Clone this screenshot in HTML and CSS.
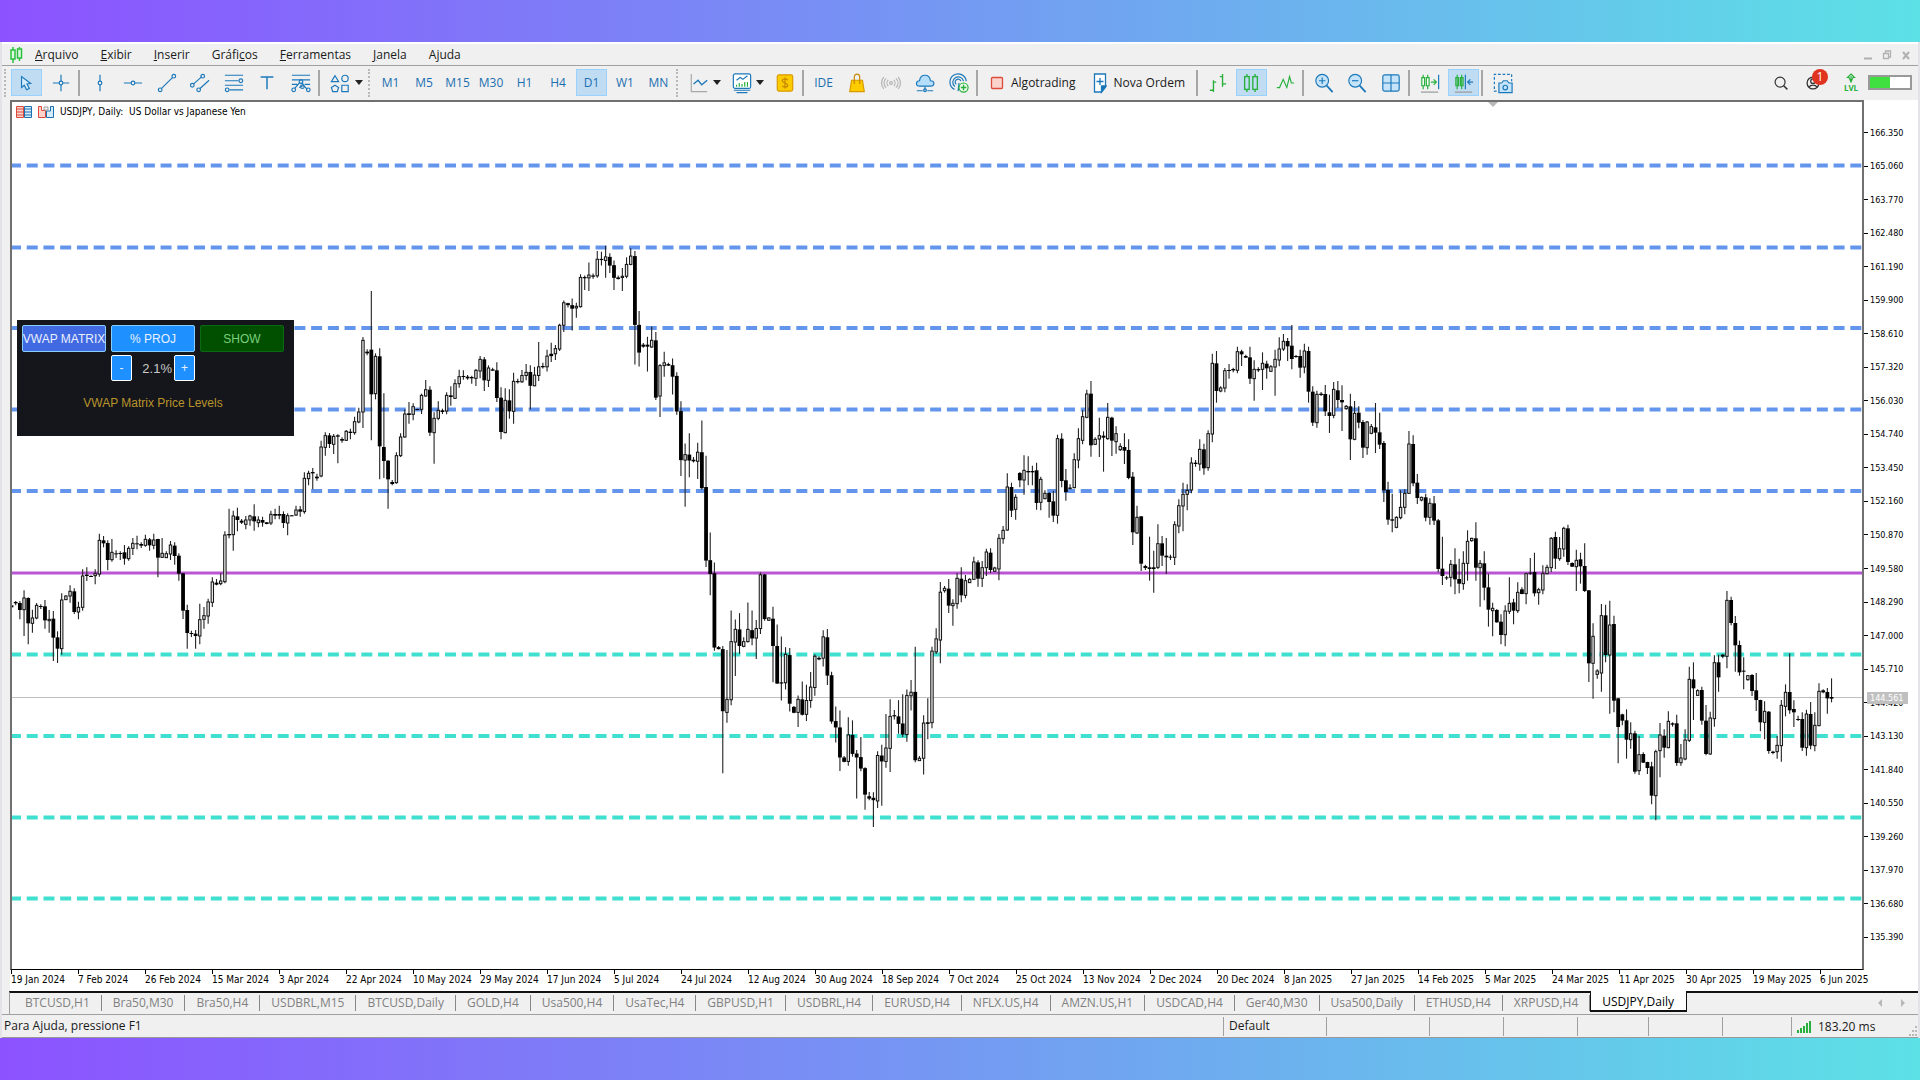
FILE: index.html
```
<!DOCTYPE html>
<html lang="pt">
<head>
    <meta charset="UTF-8">
    <meta name="viewport" content="width=device-width, initial-scale=1.0">
    <title>USDJPY,Daily</title>
    <link rel="stylesheet" href="styles.css">
</head>
<body>
    <div class="window">
        <header class="menubar">
            <svg class="logo" width="14" height="16" viewBox="0 0 14 16"><path d="M4 0v16M10.500 0v14" /><rect x="2" y="3" width="4" height="9"/><rect x="8.500" y="2" width="4" height="9"/></svg>
            <nav class="menu">
                <a href="#"><u>A</u>rquivo</a>
                <a href="#"><u>E</u>xibir</a>
                <a href="#"><u>I</u>nserir</a>
                <a href="#">Gráfi<u>c</u>os</a>
                <a href="#"><u>F</u>erramentas</a>
                <a href="#"><u>J</u>anela</a>
                <a href="#">A<u>j</u>uda</a>
            </nav>
            <div class="winbuttons">
                <button type="button" aria-label="Minimizar"><svg width="10" height="10" viewBox="0 0 10 10"><path d="M1 8.500h8" stroke-width="2"/></svg></button>
                <button type="button" aria-label="Restaurar"><svg width="10" height="10" viewBox="0 0 10 10"><path d="M1.500 3.500h5v5h-5zM3.500 3V1h5v6H7" stroke-width="1.300"/></svg></button>
                <button type="button" aria-label="Fechar"><svg width="10" height="10" viewBox="0 0 10 10"><path d="M2 2l6 7M8 2L2 9" stroke-width="2"/></svg></button>
            </div>
        </header>

        <div class="toolbar">
            <span class="grip"></span>
            <div class="group two">
                <button type="button" class="tool active" aria-label="Cursor"><svg viewBox="0 0 22 22"><path d="M5 4v12l3-2.500 2.500 5 3-1.500-2.500-5 4-.5z" fill="#d5ecfb"/></svg></button>
                <button type="button" class="tool" aria-label="Cruz"><svg viewBox="0 0 22 22"><path d="M11 2v7M11 13v7M2 11h7M13 11h7"/><circle cx="11" cy="11" r="2"/></svg></button>
            </div>
            <span class="sep"></span>
            <div class="group seven">
                <button type="button" class="tool" aria-label="Linha vertical"><svg viewBox="0 0 22 22"><path d="M11 2v7M11 13v7"/><circle cx="11" cy="11" r="2"/></svg></button>
                <button type="button" class="tool" aria-label="Linha horizontal"><svg viewBox="0 0 22 22"><path d="M1 11h8M13 11h8"/><circle cx="11" cy="11" r="2"/></svg></button>
                <button type="button" class="tool" aria-label="Linha de tendência"><svg viewBox="0 0 22 22"><path d="M5 17L17 5"/><circle cx="3.500" cy="18.500" r="2"/><circle cx="18.500" cy="3.500" r="2"/></svg></button>
                <button type="button" class="tool" aria-label="Canal"><svg viewBox="0 0 22 22"><path d="M4 12L13 4M11 17L21 8"/><circle cx="2.500" cy="13.500" r="2"/><circle cx="14" cy="3.500" r="2"/><circle cx="9.500" cy="18.500" r="2"/></svg></button>
                <button type="button" class="tool" aria-label="Fibonacci"><svg viewBox="0 0 22 22"><path d="M1 2.500h20M1 8.500h15M1 13.500h20M6 18.500h15"/><circle cx="18.500" cy="8.500" r="2"/><circle cx="3.500" cy="18.500" r="2"/></svg></button>
                <button type="button" class="tool" aria-label="Texto"><svg viewBox="0 0 22 22"><path d="M4 4.500h14M11 4.500V18" stroke-width="1.600"/></svg></button>
                <button type="button" class="tool" aria-label="Gann"><svg viewBox="0 0 22 22"><path d="M1 2.500h20M1 7.500h20M1 12.500h6M15 12.500h6M4 17l6-7M12 10l2 4 4 4M9 16l4-2"/><circle cx="11" cy="9.500" r="2"/><circle cx="3" cy="18.500" r="2"/><circle cx="12.500" cy="15" r="2"/><circle cx="19" cy="18.500" r="2"/></svg></button>
            </div>
            <span class="sep"></span>
            <div class="group shapes">
                <button type="button" class="tool" aria-label="Formas"><svg viewBox="0 0 22 22"><path d="M5.500 3l4 6.500h-8zM13 13.500h7v7h-7z"/><circle cx="16.500" cy="6" r="3.500"/><path d="M5.500 13.500l4 2.500-1.500 4.500h-5l-1.500-4.500z"/></svg></button>
                <button type="button" class="caret" aria-label="Mais formas"></button>
            </div>
            <span class="grip"></span>
            <div class="group frames">
                <button type="button" class="tool">M1</button>
                <button type="button" class="tool">M5</button>
                <button type="button" class="tool">M15</button>
                <button type="button" class="tool">M30</button>
                <button type="button" class="tool">H1</button>
                <button type="button" class="tool">H4</button>
                <button type="button" class="tool active">D1</button>
                <button type="button" class="tool">W1</button>
                <button type="button" class="tool">MN</button>
            </div>
            <span class="grip"></span>
            <div class="group charts">
                <button type="button" class="tool" aria-label="Tipo de linha"><svg viewBox="0 0 22 22"><path d="M2.500 1v19.500H20" stroke="#a8a8a8"/><path d="M5 12l5-4 4 5 6-5" stroke-width="1.500"/></svg></button>
                <button type="button" class="caret" aria-label="Mais linhas"></button>
                <button type="button" class="tool" aria-label="Indicadores"><svg viewBox="0 0 22 22"><rect x="1.500" y="1" width="19" height="16" rx="2" fill="#fff"/><path d="M5 8l4-3 3 2 5-4M2 19h18M5 21.500h12"/><path d="M5 15v-2M8 15v-4M11 15v-3M14 15v-5M17 15v-5" stroke="#28b03c"/></svg></button>
                <button type="button" class="caret" aria-label="Mais indicadores"></button>
                <button type="button" class="tool" aria-label="Mercado"><svg viewBox="0 0 22 22"><rect x="2.500" y="2" width="17" height="18" rx="2" fill="#fccb00" stroke="#d99a00"/><path d="M14 8c-1-2-6-2-6 .5S14 11 14 13.500 9 16 8 14M11 5v12" stroke="#c58600"/></svg></button>
            </div>
            <span class="sep"></span>
            <div class="group five">
                <button type="button" class="tool">IDE</button>
                <button type="button" class="tool" aria-label="Loja"><svg viewBox="0 0 22 22"><path d="M5 8h12l2 12.500H3z" fill="#fccb00" stroke="#d99a00"/><path d="M8 12V5c0-5 6-5 6 0v7" stroke="#c58600"/></svg></button>
                <button type="button" class="tool" aria-label="Sinais"><svg viewBox="0 0 22 22"><g stroke="#b4b4b4"><circle cx="11" cy="11" r="1.500"/><path d="M8 7.500c-2 2-2 5 0 7M14 7.500c2 2 2 5 0 7M5.500 6c-3 3-3 7 0 10M16.500 6c3 3 3 7 0 10M3 4.500c-3 4-3 9 0 13M19 4.500c3 4 3 9 0 13"/></g></svg></button>
                <button type="button" class="tool" aria-label="Nuvem"><svg viewBox="0 0 22 22"><path d="M5 14.500c-5 0-4-6 0-6 1-8 11-8 12 0 5 0 5 6 0 6z" fill="#b5defa"/><path d="M11 15v4M2 19.500h6.500M13.500 19.500H20"/><circle cx="11" cy="19" r="1.500"/></svg></button>
                <button type="button" class="tool" aria-label="VPS"><svg viewBox="0 0 22 22"><path d="M11 11l-1 9M6 18A9 9 0 1 1 19 9M6.500 15A6 6 0 1 1 16 9M8 12.500a3.200 3.200 0 1 1 5-3.500"/><circle cx="16" cy="16" r="5" fill="#eaf9ea" stroke="#28b03c"/><path d="M16 13v6M13 16h6" stroke="#28b03c" stroke-width="1.500"/></svg></button>
            </div>
            <span class="sep"></span>
            <div class="group orders">
                <button type="button" class="order"><svg width="14" height="22" viewBox="0 0 14 22"><rect x="1.500" y="5.500" width="11" height="11" rx="1" fill="#fbd3cc" stroke="#dc4a3c"/></svg>Algotrading</button>
                <button type="button" class="order"><svg width="14" height="22" viewBox="0 0 14 22"><path d="M1.500 2h11v13l-4 5h-7z" fill="#fff"/><path d="M13 14l-4.500 6v-6z" fill="#1b6fb0"/><path d="M7 6v7M3.500 9.500h7"/></svg>Nova Ordem</button>
            </div>
            <span class="sep"></span>
            <div class="group three">
                <button type="button" class="tool" aria-label="Barras"><svg viewBox="0 0 22 22"><path d="M6 8v13M2 19h4M6 10h3M16 1v14M13 4h3M16 12h4" stroke="#28b03c" stroke-width="1.500"/></svg></button>
                <button type="button" class="tool active" aria-label="Velas"><svg viewBox="0 0 22 22"><g stroke="#28b03c" stroke-width="1.500"><path d="M6.500 1v3M6.500 18v3M15.500 1v3M15.500 18v3"/><rect x="4" y="4" width="5" height="14"/><rect x="13" y="4" width="5" height="14"/></g></svg></button>
                <button type="button" class="tool" aria-label="Linha"><svg viewBox="0 0 22 22"><path d="M2 16h3l4-9 4 9 3-12 2 7h3" stroke="#28b03c" stroke-width="1.300"/></svg></button>
            </div>
            <span class="sep"></span>
            <div class="group three">
                <button type="button" class="tool" aria-label="Ampliar"><svg viewBox="0 0 22 22"><path d="M14 14l6.500 7" stroke-width="2"/><circle cx="9" cy="8.500" r="7" fill="#c6e4f9"/><path d="M9 5v7M5.500 8.500h7"/></svg></button>
                <button type="button" class="tool" aria-label="Reduzir"><svg viewBox="0 0 22 22"><path d="M14 14l6.500 7" stroke-width="2"/><circle cx="9" cy="8.500" r="7" fill="#c6e4f9"/><path d="M5.500 8.500h7"/></svg></button>
                <button type="button" class="tool" aria-label="Lado a lado"><svg viewBox="0 0 22 22"><rect x="2" y="2" width="18" height="18" rx="2" fill="#c6e4f9"/><path d="M11 2v18M2 11h18"/></svg></button>
            </div>
            <span class="sep"></span>
            <div class="group two">
                <button type="button" class="tool" aria-label="Deslocar"><svg viewBox="0 0 22 22"><path d="M3.500 2v16M8.500 2v16M12 10h6M15 7l3 3-3 3" stroke="#28b03c"/><path d="M2 5h3v9H2zM7 5h3v9H7z" fill="#fff" stroke="#28b03c"/><path d="M20.500 2v16"/><path d="M1 21h19" stroke="#999"/></svg></button>
                <button type="button" class="tool active" aria-label="Rolagem"><svg viewBox="0 0 22 22"><path d="M3.500 2v16M8.500 2v16" stroke="#28b03c"/><path d="M2 5h3v9H2zM7 5h3v9H7z" stroke="#28b03c"/><path d="M12.500 2v16M15 10h6M18 7l-3 3 3 3"/><path d="M1 21h19" stroke="#999"/></svg></button>
            </div>
            <span class="sep"></span>
            <button type="button" class="tool" aria-label="Captura"><svg viewBox="0 0 22 22"><path d="M4 20H1.500V1.500h19V9" stroke-dasharray="3 2"/><path d="M6.500 11h3l2-2.500h4l2 2.500h3.500v10.500h-14.500z" fill="#c6e4f9"/><circle cx="13.500" cy="16" r="2.500"/></svg></button>

            <div class="account">
                <button type="button" class="tool" aria-label="Buscar"><svg viewBox="0 0 22 22"><g stroke="#333"><circle cx="10" cy="10" r="5.500"/><path d="M14 14l4 4" stroke-width="1.600"/></g></svg></button>
                <button type="button" class="tool user" aria-label="Conta"><svg viewBox="0 0 22 22"><g stroke="#333" stroke-width="1.400"><circle cx="11" cy="11" r="6.500"/><circle cx="11" cy="9" r="2.500"/><path d="M6.500 15.500c2-3 7-3 9 0"/></g></svg><span class="badge">1</span></button>
                <div class="level"><svg width="10" height="10" viewBox="0 0 10 10"><path d="M5 1l3.500 3.500H7L5 9 3 4.500H1.500zM5 3v5"/></svg>LVL</div>
                <div class="battery"><span></span></div>
            </div>
        </div>

        <main class="chart">
            <div class="plot">
                <svg id="bars" viewBox="12 102 1850 867" preserveAspectRatio="none"></svg>
                <div class="symbol">
                    <svg width="16" height="12" viewBox="0 0 16 12"><path d="M.5.500h7v11h-7zM1 3h6M1 6h6M1 9h6" stroke="#dc4a3c" fill="#fbd3cc"/><path d="M8.500.500h7v11h-7zM9 3h6M9 6h6M9 9h6" stroke="#1b6fb0" fill="#d5ecfb"/></svg>
                    <svg width="16" height="12" viewBox="0 0 16 12"><path d="M.5.500h3v4h4v7h-7z" stroke="#dc4a3c" fill="#fbd3cc"/><path d="M8.500 5h4V.500h3v11h-7z" stroke="#1b6fb0" fill="#d5ecfb"/><path d="M6 1h4v3H6z" stroke="#999"/></svg>
                    <span>USDJPY, Daily:&nbsp; US Dollar vs Japanese Yen</span>
                </div>
                <span class="shift"></span>
                <section class="panel">
                    <button type="button" class="matrix">VWAP MATRIX</button>
                    <button type="button" class="proj">% PROJ</button>
                    <button type="button" class="show">SHOW</button>
                    <div class="step">
                        <button type="button" class="proj">-</button>
                        <output>2.1%</output>
                        <button type="button" class="proj">+</button>
                    </div>
                    <p>VWAP Matrix Price Levels</p>
                </section>
            </div>
            <div class="prices" id="prices"><span class="last">144.561</span></div>
            <div class="dates" id="dates"></div>
        </main>

        <div class="tabs">
            <button type="button">BTCUSD,H1</button>
            <button type="button">Bra50,M30</button>
            <button type="button">Bra50,H4</button>
            <button type="button">USDBRL,M15</button>
            <button type="button">BTCUSD,Daily</button>
            <button type="button">GOLD,H4</button>
            <button type="button">Usa500,H4</button>
            <button type="button">UsaTec,H4</button>
            <button type="button">GBPUSD,H1</button>
            <button type="button">USDBRL,H4</button>
            <button type="button">EURUSD,H4</button>
            <button type="button">NFLX.US,H4</button>
            <button type="button">AMZN.US,H1</button>
            <button type="button">USDCAD,H4</button>
            <button type="button">Ger40,M30</button>
            <button type="button">Usa500,Daily</button>
            <button type="button">ETHUSD,H4</button>
            <button type="button">XRPUSD,H4</button>
            <button type="button" class="current">USDJPY,Daily</button>
            <div class="scroll">
                <svg width="5" height="8" viewBox="0 0 5 8"><path d="M4 0v8L0 4z"/></svg>
                <svg width="5" height="8" viewBox="0 0 5 8"><path d="M1 0v8l4-4z"/></svg>
            </div>
        </div>

        <footer class="status">
            <span class="help">Para Ajuda, pressione F1</span>
            <span class="cell w103">Default</span>
            <span class="cell w103"></span>
            <span class="cell w74"></span>
            <span class="cell w74"></span>
            <span class="cell w71"></span>
            <span class="cell w74"></span>
            <span class="cell w69"></span>
            <span class="cell ping"><svg width="14" height="12" viewBox="0 0 14 12"><path d="M1 12V9M4 12V7M7 12V5M10 12V2M13 12V0"/></svg>183.20 ms</span>
            <svg class="resize" width="10" height="10" viewBox="0 0 10 10"><path d="M7 0h2v2H7zM4 4h2v2H4zM7 4h2v2H7zM1 8h2v2H1zM4 8h2v2H4zM7 8h2v2H7z"/></svg>
        </footer>
    </div>
    <script src="chart.js"></script>
</body>
</html>
```

FILE: styles.css
```
* {
    box-sizing: border-box;
}
body {
    margin: 0;
    height: 100vh;
    padding: 42px 2px;
    display: flex;
    background: linear-gradient(90deg, #8c52ff, #5ce1e6);
    font-family: "Open Sans", "Noto Sans", sans-serif;
    font-size: 12px;
    line-height: 16px;
    color: #1a1a1a;
}
button {
    font: inherit;
    color: inherit;
    background: none;
    border: 0;
    padding: 0;
    margin: 0;
}
svg {
    display: block;
    flex: none;
    fill: none;
}
.window {
    flex: 1;
    min-width: 0;
    display: flex;
    flex-direction: column;
    background: #f0f0f0;
    border-top: 2px solid #fff;
    border-bottom: 1px solid #999;
    box-shadow: 0 0 0 2px #e4e4e8;
    clip-path: inset(0 -2px);
}

/* menu */
.menubar {
    height: 22px;
    display: flex;
    align-items: center;
    padding: 0 7px;
    border-bottom: 1px solid #a0a0a0;
}
.logo {
    stroke: #28c03c;
    stroke-width: 1.5;
}
.logo rect {
    fill: #e2f7e2;
}
.menu {
    display: flex;
    gap: 22px;
    margin-left: 12px;
}
.menu a {
    color: inherit;
    text-decoration: none;
}
.winbuttons {
    margin-left: auto;
    display: flex;
    gap: 9px;
}
.winbuttons svg {
    stroke: #b0b0b0;
}

/* toolbar */
.toolbar {
    height: 34px;
    display: flex;
    align-items: center;
    padding: 0 6px 1px 0;
}
.grip {
    width: 3px;
    height: 28px;
    margin: 0 4px 0 2px;
    border-left: 2px dotted #b8b8b8;
}
.sep {
    width: 2px;
    height: 26px;
    margin: 0 4px 0 2px;
    background: #a6a6a6;
}
.group {
    display: flex;
    align-items: center;
    justify-content: space-between;
}
.two { width: 65px; }
.three { width: 98px; }
.five { width: 166px; }
.seven { width: 232px; }
.shapes { width: 42px; justify-content: flex-start; }
.frames { width: 299px; }
.charts { width: 117px; }
.tool {
    width: 31px;
    height: 27px;
    display: flex;
    align-items: center;
    justify-content: center;
    color: #1b6fb0;
}
.tool svg {
    width: 20px;
    height: 20px;
    overflow: visible;
    stroke: #1b78ba;
    stroke-width: 1.3;
}
.active {
    background: #c0dcf3;
    border: 1px solid #99d1ff;
}
.caret {
    border: 4px solid transparent;
    border-top: 5px solid #222;
    border-bottom: 0;
}
.charts .caret {
    margin: 0 3px 0 -3px;
}
.orders {
    width: 212px;
    padding: 0 9px 0 8px;
}
.order {
    display: flex;
    align-items: center;
    gap: 7px;
    color: #1a1a1a;
    white-space: nowrap;
}
.order svg {
    stroke: #1b78ba;
    stroke-width: 1.3;
}
.account {
    margin-left: auto;
    display: flex;
    align-items: center;
    gap: 1px;
}
.user {
    position: relative;
}
.badge {
    position: absolute;
    top: 0;
    right: 0;
    width: 16px;
    height: 16px;
    border-radius: 8px;
    background: #e03420;
    color: #fff;
    text-align: center;
}
.level {
    width: 30px;
    margin: 0 1px 0 7px;
    display: flex;
    flex-direction: column;
    align-items: center;
    font-size: 8px;
    font-weight: bold;
    line-height: 9px;
    color: #28b03c;
}
.level svg {
    stroke: #28b03c;
    stroke-width: 1.2;
}
.battery {
    width: 44px;
    height: 15px;
    border: 2px solid #999;
    background: #fff;
}
.battery span {
    display: block;
    width: 50%;
    height: 100%;
    background: #40e040;
}

/* chart */
.chart {
    flex: 1;
    min-height: 0;
    margin-left: 8px;
    display: grid;
    grid-template-columns: minmax(0, 1fr) 54px;
    grid-template-rows: minmax(0, 1fr) 21px;
    background: #fff;
    font-family: "DejaVu Sans Condensed", "DejaVu Sans", sans-serif;
    font-stretch: condensed;
    font-size: 9px;
    line-height: 12px;
    color: #000;
}
.plot {
    position: relative;
    min-height: 0;
    border: 2px solid #707070;
    border-bottom: 1px solid #000;
}
#bars {
    position: absolute;
    width: 100%;
    height: 100%;
}
.wick {
    stroke: #222;
    stroke-width: 1.1;
}
.up {
    fill: #e4e4e4;
    stroke: #111;
    stroke-width: 1;
}
.down {
    fill: #000;
}
.level-up,
.level-down {
    stroke: #6495ed;
    stroke-width: 4;
    stroke-dasharray: 11 5.73;
    stroke-dashoffset: 2;
}
.level-down {
    stroke: #40e0d0;
}
.vwap {
    stroke: #ba55d3;
    stroke-width: 3;
}
.bid {
    stroke: #c0c0c0;
    stroke-width: 1;
}
.symbol {
    position: relative;
    display: flex;
    align-items: center;
    gap: 6px;
    padding: 4px;
    font-size: 10px;
}
.shift {
    position: absolute;
    top: 0;
    left: calc(80% - 4px);
    border: 5px solid transparent;
    border-top-color: #b8b8b8;
    border-bottom: 0;
}
.prices {
    position: relative;
    padding: 16px 0;
    display: grid;
    grid-auto-rows: 1fr;
    align-items: center;
}
.price {
    display: flex;
    align-items: center;
    gap: 2px;
}
.price::before {
    content: "";
    width: 4px;
    border-top: 1px solid #000;
}
.last {
    position: absolute;
    top: 68%;
    left: 3px;
    width: 41px;
    padding-left: 3px;
    background: #c0c0c0;
    color: #fff;
}
.dates {
    grid-column: 1 / -1;
    margin: 0 54px 0 1px;
    display: grid;
    grid-template-columns: repeat(27, minmax(0, 1fr)) 44px;
    font-size: 10px;
    white-space: nowrap;
}
.date::before {
    content: "";
    display: block;
    height: 4px;
    border-left: 1px solid #000;
}

/* indicator panel */
.panel {
    position: absolute;
    top: 218px;
    left: 5px;
    width: 277px;
    height: 116px;
    padding: 5px 10px 5px 5px;
    display: grid;
    grid-template-columns: repeat(3, 84px);
    grid-template-rows: 27px 26px 36px;
    gap: 3px 5px;
    background: #15161c;
    font-family: "Liberation Sans", Arial, sans-serif;
    font-stretch: normal;
    font-size: 12px;
}
.panel button {
    border: 1px solid #87cefa;
    border-radius: 2px;
    color: #e8f0ff;
    white-space: nowrap;
    display: flex;
    align-items: center;
    justify-content: center;
}
.panel .matrix {
    background: #4169e1;
}
.panel .proj {
    background: #1e90ff;
}
.panel .show {
    background: #005000;
    border-color: #0a6a14;
    color: #7ccf7c;
}
.step {
    grid-column: 2;
    display: flex;
    justify-content: space-between;
}
.panel .step button {
    width: 21px;
    border-color: #fff;
}
.step output {
    margin-left: auto;
    padding: 0 2px;
    font-size: 13px;
    line-height: 28px;
    color: #c8c8c8;
}
.panel p {
    grid-column: 1 / -1;
    margin: 0;
    text-align: center;
    line-height: 38px;
    color: #b8942a;
}

/* tabs and status bar */
.tabs {
    height: 23px;
    margin-left: 7px;
    display: flex;
    align-items: flex-start;
    border-top: 2px solid #111;
    border-left: 1px solid #a0a0a0;
    color: #808080;
}
.tabs button {
    height: 16px;
    margin-top: 2px;
    padding: 0 11px;
    border-right: 1px solid #888;
    white-space: nowrap;
}
.tabs button:first-child {
    padding-left: 15px;
}
.tabs .current {
    height: 21px;
    margin-top: -2px;
    padding: 3px 12px 0 11px;
    background: #fff;
    border: 1px solid #111;
    border-top: 0;
    border-bottom-width: 2px;
    color: #000;
}
.scroll {
    margin-left: auto;
    padding: 6px 13px 0 0;
    display: flex;
    gap: 17px;
}
.scroll svg,
.resize {
    fill: #b8b8b8;
}
.status {
    height: 23px;
    padding: 2px 0 1px 2px;
    display: flex;
    border-top: 1px solid #a0a0a0;
    line-height: 18px;
}
.help {
    flex: 1;
}
.cell {
    padding-left: 5px;
    border-left: 1px solid #a0a0a0;
}
.w103 { width: 103px; }
.w74 { width: 74px; }
.w71 { width: 71px; }
.w69 { width: 69px; }
.ping {
    width: 117px;
    display: flex;
    align-items: center;
    gap: 7px;
}
.ping svg {
    stroke: #28b03c;
    stroke-width: 2;
}
.resize {
    align-self: flex-end;
}
```

FILE: chart.js
```
// each block: first bar, y of its origin, units per pixel, then "high top bottom low" + u(p) or d(own)
const blocks = [
    [0, 400, 3, "612 616 622 624d,603 606 610 616d,603 609 630 658d,571 594 629 708u,592 594 670 733d,629 654 670 698u,609 616 654 658u,613 618 621 627d,600 619 661 686d,630 658 662 698u,633 656 713 783d,694 712 746 789d,580 600 746 764u,586 588 599 600u,556 574 588 608u,565 574 636 642d,605 622 636 658u,508 528 622 632u,502 524 528 543d,526 528 530 531d,508 521 527 553u,401 421 522 530u,408 421 430 442d,421 429 480 511d,417 457 479 485u,451 460 463 474d,454 459 461 480d,435 457 476 494d,439 445 476 482u,414 430 445 465u,407 430 433 448d,427 432 437 444d,404 418 436 440u,414 418 436 452d,401 420 436 448u,416 417 473 532d,414 460 472 474u,454 461 473 474u,423 435 462 480u,427 437 468 494d,460 467 521 542d,519 520 632 657d,614 630 699 746d,692 699 702 711d,690 701 708 746d,611 659 708 733u,621 647 658 686u,596 606 648 671u,532 546 607 621u,537 548 554 556d,520 543 551 556u,394 405 545 550u,326 402 406 415d,332 348 404 452u,323 349 360 394d,357 362 368 372d,348 360 373 388u,344 348 360 377u,313 349 364 392d,349 360 368 382u,350 360 368 380d,366 367 372 373d,332 343 369 375u,326 342 347 358d,317 342 347 358d,334 342 369 384d,340 347 369 406u,345 346 347 348d,317 330 345 348u,318 328 335 350d,217 235 335 341u,212 220 236 256u,204 216 220 268d,221 230 235 242d,122 141 228 232u,97 107 142 167u,99 106 132 144d,102 109 133 162u,103 106 110 190d,112 117 122 128d,90 94 121 122u,86 95 99 118d,50 65 98 104u,23 36 66 70u"],
    [84, 280, 3, "171 181 396 444u,208 215 220 226d,33 209 343 481d,220 229 341 358u,205 229 499 598d,340 501 543 594d,541 542 598 686d,600 606 612 616d,517 527 608 611u,460 471 527 531u,388 402 471 473u,366 400 405 431d,370 380 403 421u,386 387 389 391d,341 346 388 402u,300 329 348 350u,319 329 458 468d,397 415 458 551u,364 391 415 421u,386 391 396 402d,337 346 393 403u,319 346 351 377d,298 311 355 357u,269 290 311 323u,271 288 290 299d,285 290 295 299d,287 291 295 311d,267 271 295 318u,228 238 273 295u,231 238 301 333d,256 264 301 321u,263 268 272 273d,247 271 354 366d,322 353 456 478d,325 361 458 460u,328 361 394 416d,278 304 394 431u"],
    [121, 230, 2.529, "376 382 385 388d,354 368 384 386u,339 360 368 380u,342 359 394 454d,346 367 394 395u,283 346 368 382u,336 344 347 350d,303 319 346 358u,285 313 319 334d,291 300 313 329u,237 241 301 306u,178 184 241 258u,184 185 190 196d,173 190 199 254d,184 193 197 222u,112 120 194 196u,115 119 122 152d,82 114 121 154u,110 115 118 123d,53 74 116 121u,55 73 76 90d,40 68 77 121u,59 68 90 109d,77 89 121 152d,115 120 124 125d,96 117 120 154u,69 87 117 122u,46 66 87 89u,53 66 240 340d,205 240 310 345d,286 290 295 298d,270 290 295 358d,244 279 296 298u,258 279 424 430d,339 343 420 473u,308 336 343 371u,336 339 343 344d,325 342 371 416d,360 369 459 467d,433 458 582 622d,540 568 582 700u,514 568 583 625d,574 581 585 588d,538 562 585 630u,482 562 653 656d,571 650 836 852d,765 835 870 924d,841 868 1056 1064d,1052 1055 1060 1061d,1052 1060 1217 1374d,1062 1187 1220 1246u,962 1041 1188 1202u,985 1010 1042 1128u,969 1010 1052 1072d,1030 1041 1053 1055u,942 1010 1041 1043u,962 1012 1033 1050d,986 1008 1032 1085u,866 872 1008 1022u,870 871 984 988d,980 981 987 988u,953 983 1052 1144d,998 1052 1147 1148d,1028 1144 1147 1190d,1055 1073 1145 1162u,1057 1075 1198 1218d,1204 1206 1221 1222d,1177 1187 1220 1257u,1142 1187 1226 1228d,1150 1190 1225 1242u,1118 1156 1190 1208u,1073 1078 1157 1178u,1078 1082 1086 1088d,1012 1029 1083 1104u,1009 1030 1127 1151d,1117 1126 1243 1249d,1205 1242 1258 1296d,1215 1258 1334 1368d,1330 1334 1345 1346d,1232 1277 1344 1355u,1240 1277 1325 1332d,1315 1324 1334 1438d,1282 1333 1362 1369d,1359 1361 1428 1466d,1421 1432 1438 1442d,1422 1436 1442 1510d,1318 1329 1444 1462u,1302 1329 1344 1456d,1224 1310 1344 1360u,1187 1230 1311 1371u,1214 1227 1230 1238d,1189 1230 1249 1274d,1174 1248 1276 1282d,1162 1177 1276 1294u,1138 1169 1178 1215u,1054 1168 1341 1346d,1330 1336 1342 1343u,1227 1247 1336 1377u,1184 1245 1249 1288d,1054 1065 1246 1260u,1007 1034 1067 1072u,890 916 1037 1096u"],
    [223, 300, 3, "858 865 872 878u,837 866 917 939d,898 910 917 977u,819 835 911 926u,802 836 886 907d,825 842 886 895u,835 838 848 849u,770 786 838 839u,781 787 836 860d,783 803 835 861u,746 756 803 828u,745 758 810 819d,800 804 814 815u,702 715 807 841u,678 691 716 731u,520 561 690 692u,548 561 632 651d,583 592 628 659u,516 519 541 562d,466 511 540 584u,469 513 517 556d,497 513 517 556d,488 511 609 629d,530 538 607 631u,571 580 596 598u,577 579 606 653d,572 604 647 666d,404 416 646 671u,400 416 543 562d,507 541 576 602d,553 564 566 567u,460 479 563 565u,385 416 480 505u,331 350 421 433u,269 282 352 355u,243 281 436 470d,412 418 433 435u,353 407 417 471u,394 407 413 515d,309 352 416 419u,350 353 422 468d,379 401 425 461u,430 439 449 453u,400 441 452 492d,418 450 534 538d,516 530 697 735d,617 652 699 702u,648 649 791 813d,794 798 804 810d,710 802 807 842d,752 802 807 878d,673 731 802 807u,708 730 767 798d,714 767 772 822d,764 770 773 780d,664 674 772 795u,598 617 678 700u,548 583 618 694u,553 571 583 631u,472 489 570 580u,480 488 492 500d,418 448 492 512u,431 448 505 524d,391 401 503 512u,161 190 402 427u,153 190 273 308d,259 264 273 277u,204 212 264 277u,192 210 213 236d,203 207 211 217d,140 155 211 220u,149 154 163 198d,164 168 173 174d,140 172 236 252d,181 208 236 302u,202 207 211 216d,157 190 208 270u,182 191 205 236d,195 200 214 215u,149 178 201 287u,112 147 180 199u,102 124 147 153u,114 123 139 183d,75 137 177 208d,165 168 171 173d,149 168 203 233d,131 153 201 220u,140 153 275 308d,259 275 368 378d,272 283 368 383u,276 281 285 288d,255 282 334 348d,284 337 348 399d,246 268 346 355u,243 271 300 324d,256 300 307 393d,315 319 326 329u,281 319 418 480d,303 340 418 421u,319 338 368 385d,360 366 443 474d,363 366 443 464u,372 380 400 403u,309 382 398 459d,338 397 434 447d,423 429 571 606d,545 570 659 674d,581 658 662 697d,649 652 682 685u"],
    [332, 310, 3, "541 592 623 628u,538 550 592 613u,363 402 550 552u,376 402 520 529d,492 518 564 582d,560 562 570 574u,551 562 623 634d,565 580 622 644u,558 580 632 645d,627 631 777 787d,680 776 798 825d,797 802 805 810d,750 763 802 830u,715 763 808 853d,746 807 821 850d,724 760 821 839u,661 694 760 812u,683 685 692 695u,637 685 773 812d,750 760 773 890u,724 760 833 871d"],
    [353, 400, 3, "521 562 629 680d,608 625 632 709u,627 630 667 668d,643 665 705 733d,616 633 704 739u,532 610 634 642u,596 607 632 673d,547 577 632 639u,562 568 582 583d,518 521 581 613u,474 518 521 524d,458 516 580 589d,563 569 578 614u,496 521 570 583u,494 502 521 523u,411 415 503 516u,395 411 476 507d,411 446 476 482u,380 385 447 470u,374 385 486 495d,487 489 500 501d,449 481 500 573u,458 478 499 551d,430 498 573 576d,570 571 790 846d,670 709 790 896u,808 813 823 836u,612 647 819 875u,614 646 765 787d,602 675 765 941u,647 672 902 937d,894 895 981 1090d,941 943 962 976d,928 961 1019 1076d,967 1001 1019 1046u,992 1000 1115 1121d,1007 1064 1112 1125u,1057 1062 1088 1089d,1085 1086 1104 1122d,1085 1099 1187 1213d,1049 1055 1187 1261u,969 1005 1052 1132u,988 1007 1043 1073d,934 964 1043 1045u,967 970 974 980d,944 970 1089 1097d,1032 1074 1088 1097u,988 1020 1077 1081u,800 838 1021 1026u,787 838 865 960d,868 872 886 888u,860 870 962 974d,915 962 1062 1066d,935 954 1062 1064u,766 788 956 980u,764 787 832 875d,762 764 770 775d,573 601 769 805u,590 600 669 676d,648 669 736 815d,722 735 817 827d,772 812 815 868d,825 827 839 842u,822 825 873 888d,819 871 900 933d,899 900 967 994d,904 934 967 1018u,933 935 1053 1061d,1052 1055 1059 1063d,1008 1036 1055 1076u,900 916 1037 1085u,853 877 919 949u,760 876 931 941d,901 927 937 981d,947 957 960 963d,937 957 1043 1053d,929 942 1043 1067u,906 942 1037 1048d,937 976 1037 1054u,850 874 977 979u,868 871 877 880d,864 876 895 941d,835 891 896 907d"]
];

const levels = [
    [165.5, "level-up"], [247.5, "level-up"], [328, "level-up"], [409.5, "level-up"], [491, "level-up"],
    [573, "vwap"],
    [654.5, "level-down"], [736, "level-down"], [817.5, "level-down"], [898.5, "level-down"],
    [697.5, "bid"]
];

let svg = "";
for (const [y, name] of levels) {
    svg += `<line class="${name}" x1="12" x2="1862" y1="${y}" y2="${y}"/>`;
}
for (const [first, origin, unit, list] of blocks) {
    list.split(",").forEach((bar, i) => {
        const x = 11.5 + (first + i) * 4.184;
        const up = bar.endsWith("u");
        const [high, top, bottom, low] = bar.slice(0, -1).split(" ").map(v => origin + v / unit);
        svg += `<line class="wick" x1="${x}" x2="${x}" y1="${high}" y2="${low}"/>`;
        if (up) {
            svg += `<rect class="up" x="${x - 1.2}" width="2.4" y="${top}" height="${bottom - top}"/>`;
        } else {
            svg += `<rect class="down" x="${x - 1.9}" width="3.8" y="${top}" height="${Math.max(bottom - top, 1)}"/>`;
        }
    });
}
document.getElementById("bars").innerHTML = svg;

const prices = document.getElementById("prices");
for (let i = 24; i >= 0; i--) {
    const item = document.createElement("span");
    item.className = "price";
    item.textContent = (135.39 + i * 1.29).toFixed(3);
    prices.insertBefore(item, prices.querySelector(".last"));
}

const dates = ["19 Jan 2024", "7 Feb 2024", "26 Feb 2024", "15 Mar 2024", "3 Apr 2024", "22 Apr 2024", "10 May 2024",
    "29 May 2024", "17 Jun 2024", "5 Jul 2024", "24 Jul 2024", "12 Aug 2024", "30 Aug 2024", "18 Sep 2024",
    "7 Oct 2024", "25 Oct 2024", "13 Nov 2024", "2 Dec 2024", "20 Dec 2024", "8 Jan 2025", "27 Jan 2025",
    "14 Feb 2025", "5 Mar 2025", "24 Mar 2025", "11 Apr 2025", "30 Apr 2025", "19 May 2025", "6 Jun 2025"];
for (const text of dates) {
    const item = document.createElement("span");
    item.className = "date";
    item.textContent = text;
    document.getElementById("dates").append(item);
}
```
